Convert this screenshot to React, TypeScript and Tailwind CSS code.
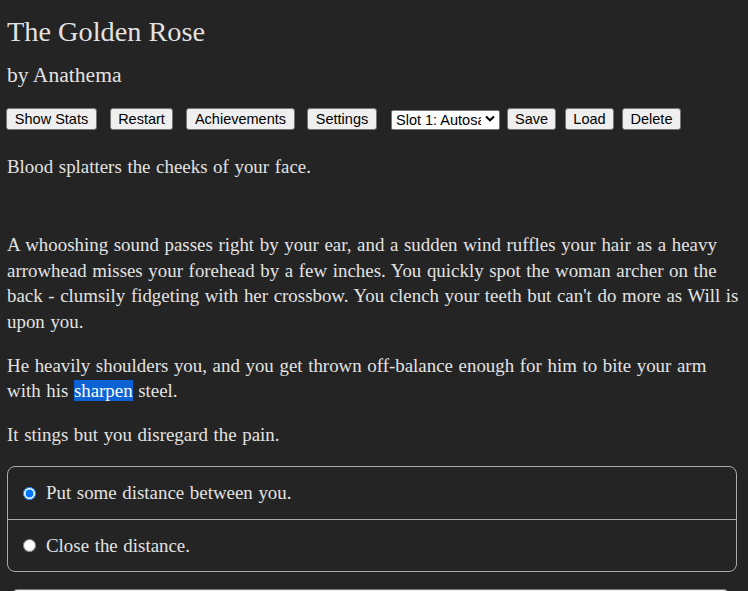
import React from "react";

const serif = { fontFamily: '"Liberation Serif", "Times New Roman", serif' };

function Btn({ label, w, ml }: { label: string; w: string; ml: string }) {
  return (
    <button
      type="button"
      className={`${w} ${ml} h-[22px] shrink-0 rounded-[3px] border border-[#767676] bg-[#efefef] text-center text-[14.5px] leading-[20px] text-black`}
      style={{ fontFamily: '"Liberation Sans", Arial, sans-serif' }}
    >
      {label}
    </button>
  );
}

export default function App() {
  return (
    <div
      className="min-h-screen overflow-hidden bg-[#242424] pl-[7px] pr-[11px] pt-[15px] pb-[40px] text-[#e2e2e2]"
      style={serif}
    >
      <h1 className="text-[28.3px] leading-[34px] font-normal">The Golden Rose</h1>
      <h2 className="mt-[12px] text-[21.6px] leading-[28px] font-normal">by Anathema</h2>

      <div className="-ml-px mt-[19px] flex items-start">
        <Btn label="Show Stats" w="w-[91px]" ml="ml-0" />
        <Btn label="Restart" w="w-[63px]" ml="ml-[13px]" />
        <Btn label="Achievements" w="w-[109px]" ml="ml-[13px]" />
        <Btn label="Settings" w="w-[70px]" ml="ml-[12px]" />
        <div className="relative ml-[14px] h-[20px] w-[109px] shrink-0">
          <select
            className="h-[20px] w-[109px] appearance-none overflow-hidden rounded-[2px] border border-[#767676] bg-white pl-[4px] pr-[18px] text-[14.5px] leading-[18px] text-black"
            style={{ fontFamily: '"Liberation Sans", Arial, sans-serif' }}
            defaultValue="1"
          >
            <option value="1">Slot 1: Autosave</option>
            <option value="2">Slot 2: Empty</option>
          </select>
          <svg
            className="pointer-events-none absolute right-[5px] top-[7px]"
            width="10"
            height="7"
            viewBox="0 0 10 7"
          >
            <path d="M1 1.5 L5 5.3 L9 1.5" fill="none" stroke="#000" strokeWidth="2" />
          </svg>
        </div>
        <Btn label="Save" w="w-[49px]" ml="ml-[7px]" />
        <Btn label="Load" w="w-[49px]" ml="ml-[9px]" />
        <Btn label="Delete" w="w-[59px]" ml="ml-[8px]" />
      </div>

      <div className="text-[18.9px] leading-[25.6px] [word-spacing:0.9px]">
        <p className="mt-[24px]">Blood splatters the cheeks of your face.</p>
        <p className="mt-[52.4px] whitespace-nowrap">
          A whooshing sound passes right by your ear, and a sudden wind ruffles your hair as a heavy
          <br />
          arrowhead misses your forehead by a few inches. You quickly spot the woman archer on the
          <br />
          back - clumsily fidgeting with her crossbow. You clench your teeth but can't do more as Will is
          <br />
          upon you.
        </p>
        <p className="mt-[18.3px] whitespace-nowrap">
          He heavily shoulders you, and you get thrown off-balance enough for him to bite your arm
          <br />
          with his <span className="bg-[#0b63d6] text-white">sharpen</span> steel.
        </p>
        <p className="mt-[18.3px]">It stings but you disregard the pain.</p>

        <div className="mt-[18.3px] rounded-[8px] border border-[#aaaaaa]">
          <label className="flex h-[52px] items-center pl-[15px]">
            <input type="radio" name="choice" defaultChecked className="m-0 h-[13px] w-[13px] accent-[#0075ff]" />
            <span className="ml-[10px]">Put some distance between you.</span>
          </label>
          <label className="flex h-[52px] items-center border-t border-[#aaaaaa] pl-[15px]">
            <input type="radio" name="choice" className="m-0 h-[13px] w-[13px]" />
            <span className="ml-[10px]">Close the distance.</span>
          </label>
        </div>

        <button
          type="button"
          className="mt-[17px] ml-[6px] h-[34px] w-[715px] rounded-[4px] border border-[#767676] bg-[#efefef] text-[16px] text-black"
          style={{ fontFamily: '"Liberation Sans", Arial, sans-serif' }}
        >
          Next
        </button>
      </div>
    </div>
  );
}
